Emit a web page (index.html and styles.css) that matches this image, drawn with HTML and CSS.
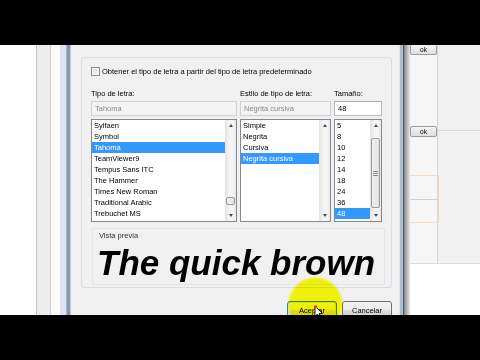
FILE: index.html
```html
<!DOCTYPE html>
<html lang="es">
<head>
<meta charset="utf-8">
<title>Fuente</title>
<link rel="stylesheet" href="styles.css">
</head>
<body>
<div class="letterbox"></div>
<div class="screen">
  <div class="desk-left"></div>
  <div class="frame-left"></div>
  <div class="dlg-body">
    <div class="group">
      <div class="check-row"><span class="checkbox"></span><span>Obtener el tipo de letra a partir del tipo de letra predeterminado</span></div>
      <div class="cols">
        <div class="col col-font">
          <div class="lbl">Tipo de letra:</div>
          <div class="field disabled">Tahoma</div>
          <div class="list">
            <ul class="items">
              <li>Sylfaen</li>
              <li>Symbol</li>
              <li class="sel">Tahoma</li>
              <li>TeamViewer9</li>
              <li>Tempus Sans ITC</li>
              <li>The Hammer</li>
              <li>Times New Roman</li>
              <li>Traditional Arabic</li>
              <li>Trebuchet MS</li>
            </ul>
            <div class="vscroll">
              <span class="arrow up"></span>
              <span class="track"><span class="thumb thumb-small"></span></span>
              <span class="arrow down"></span>
            </div>
          </div>
        </div>
        <div class="col col-style">
          <div class="lbl">Estilo de tipo de letra:</div>
          <div class="field disabled">Negrita cursiva</div>
          <div class="list">
            <ul class="items">
              <li>Simple</li>
              <li>Negrita</li>
              <li>Cursiva</li>
              <li class="sel">Negrita cursiva</li>
            </ul>
            <div class="vscroll">
              <span class="arrow up"></span>
              <span class="track"></span>
              <span class="arrow down"></span>
            </div>
          </div>
        </div>
        <div class="col col-size">
          <div class="lbl">Tamaño:</div>
          <div class="field">48</div>
          <div class="list">
            <ul class="items">
              <li>5</li>
              <li>8</li>
              <li>10</li>
              <li>12</li>
              <li>14</li>
              <li>18</li>
              <li>24</li>
              <li>36</li>
              <li class="sel">48</li>
            </ul>
            <div class="vscroll">
              <span class="arrow up"></span>
              <span class="track"><span class="thumb thumb-big"><span class="grip"></span></span></span>
              <span class="arrow down"></span>
            </div>
          </div>
        </div>
      </div>
      <div class="preview">
        <div class="preview-lbl">Vista previa</div>
        <div class="sample">The quick brown</div>
      </div>
    </div>
    <div class="buttons">
      <button class="btn btn-default">Aceptar</button>
      <button class="btn">Cancelar</button>
    </div>
  </div>
  <div class="frame-right"></div>
  <div class="behind">
    <div class="behind-top">
      <div class="pane-a">
        <div class="mini-btn mini-top">ok</div>
        <div class="mini-btn mini-second">ok</div>
        <div class="orange-box"><div class="ob-half"></div><div class="ob-half"></div></div>
      </div>
      <div class="pane-b"><div class="hline"></div></div>
    </div>
    <div class="behind-bottom"></div>
  </div>
  <div class="highlight"></div>
  <svg class="cursor" width="10" height="14" viewBox="0 0 10 14">
    <path d="M1 1 L1 11.5 L3.5 9 L5.5 13 L7 12.3 L5.2 8.5 L8.5 8.5 Z" fill="#fff" stroke="#000" stroke-width="0.9" stroke-linejoin="round"/>
    <circle cx="1.5" cy="2" r="1.8" fill="#e8401c"/>
  </svg>
</div>
<div class="letterbox"></div>
</body>
</html>
```
FILE: styles.css
```css
* { box-sizing: border-box; margin: 0; padding: 0; }
html, body { width: 480px; height: 360px; overflow: hidden; }
body {
  background: #000;
  font-family: "Liberation Sans", Arial, sans-serif;
  font-size: 7.5px;
  color: #000;
}
.letterbox { height: 45px; background: #000; }
.screen {
  position: relative;
  height: 270px;
  display: flex;
  overflow: hidden;
  background: #f0f0f0;
}
.desk-left {
  width: 60px;
  background: linear-gradient(to right,
    #ffffff 0 36px, #c6c6c6 36px 37px, #ececec 37px 50px,
    #cdcdcd 50px 51px, #fbfbfb 51px 60px);
}
.frame-left {
  width: 11px;
  background: linear-gradient(to right,
    #dfe2f0 0 6px, #aab6c8 6px 7px, #8797b0 7px 10px, #c8ccd4 10px 11px);
}
.dlg-body {
  width: 328px;
  background: #f0f0f0;
  padding: 12px 7px 0 10px;
}
.group {
  border: 1px solid #d5dfe5;
  border-radius: 3px;
  padding: 9px 9px 2px 9px;
}
.check-row {
  display: flex;
  align-items: center;
  gap: 2px;
  height: 9px;
  line-height: 9px;
}
.checkbox {
  width: 9px;
  height: 9px;
  border: 1px solid #8f8f8f;
  background: linear-gradient(135deg, #dcdcdc, #f8f8f8);
  box-shadow: inset 0 0 0 1px #f4f4f4;
}
.cols {
  display: flex;
  gap: 3px;
  margin-top: 13px;
}
.col { display: flex; flex-direction: column; }
.col-font { width: 146px; }
.col-style { width: 91px; }
.col-size { width: 48px; }
.lbl { height: 9px; line-height: 9px; }
.field {
  margin-top: 3px;
  height: 15px;
  line-height: 13px;
  padding-left: 3px;
  border: 1px solid #b7bac0;
  border-top-color: #abadb3;
  background: #fff;
}
.field.disabled { background: #f3f3f3; color: #8a8a8a; border-color: #cfd1d5; }
.list {
  margin-top: 3px;
  height: 103px;
  border: 1px solid #828790;
  background: #fff;
  display: flex;
  overflow: hidden;
}
.items { flex: 1; list-style: none; overflow: hidden; }
.items li { height: 11px; line-height: 11px; padding-left: 2px; white-space: nowrap; }
.items li.sel { background: #3399ff; color: #fff; }
.vscroll {
  width: 11px;
  display: flex;
  flex-direction: column;
  background: linear-gradient(to right, #e3e3e3, #f5f5f5 40%, #f5f5f5 70%, #e8e8e8);
}
.arrow {
  height: 11px;
  display: flex;
  align-items: center;
  justify-content: center;
}
.arrow::before {
  content: "";
  width: 0;
  height: 0;
  border-left: 2.5px solid transparent;
  border-right: 2.5px solid transparent;
}
.arrow.up::before { border-bottom: 3px solid #4a4a4a; }
.arrow.down::before { border-top: 3px solid #4a4a4a; }
.track { flex: 1; display: flex; flex-direction: column; }
.thumb {
  margin: 0 1px;
  border: 1px solid #9a9a9a;
  border-radius: 2px;
  background: linear-gradient(to right, #f2f2f2, #e2e2e2);
}
.thumb-small { margin-top: 66px; height: 8px; }
.thumb-big {
  margin-top: 7px;
  height: 70px;
  display: flex;
  align-items: center;
  justify-content: center;
}
.grip {
  width: 5px;
  height: 5px;
  background: repeating-linear-gradient(to bottom, #8c8c8c 0 1px, transparent 1px 2px);
}
.preview {
  margin: 6px -3px 0 1px;
  height: 57px;
  border: 1px solid #e4e4e4;
  padding: 2px 0 0 6px;
}
.preview-lbl { height: 9px; line-height: 9px; color: #333; }
.sample {
  margin-top: 3px;
  margin-left: -2px;
  font-size: 35px;
  line-height: 40px;
  font-weight: bold;
  font-style: italic;
  white-space: nowrap;
}
.buttons {
  display: flex;
  justify-content: flex-end;
  gap: 5px;
  margin-top: 13px;
}
.btn {
  width: 50px;
  height: 18px;
  font-family: inherit;
  font-size: 7.5px;
  color: #000;
  border: 1px solid #707070;
  border-radius: 3px;
  background: linear-gradient(#f2f2f2, #ebebeb 50%, #dddddd 50%, #cfcfcf);
}
.btn-default { border-color: #3c7fb1; box-shadow: inset 0 0 0 1px #c8e6f8; }
.frame-right {
  width: 11px;
  background: linear-gradient(to right,
    #dce4ec 0 1px, #a9bdd1 1px 4px, #4c4c4c 4px, #9a9a9a 6px, #e6e6e6 11px);
}
.behind {
  width: 70px;
  display: flex;
  flex-direction: column;
  background: #f0f0f0;
}
.behind-top { flex: 1; display: flex; }
.pane-a {
  width: 28px;
  background: #f6f6f6;
  border-right: 1px solid #d6d6d6;
  display: flex;
  flex-direction: column;
}
.mini-btn {
  height: 11px;
  line-height: 10px;
  text-align: center;
  font-size: 6.5px;
  border: 1px solid #9c9c9c;
  border-radius: 2px;
  background: linear-gradient(#f4f4f4, #dedede);
}
.mini-top { border-top: none; height: 10px; }
.mini-second { margin-top: 71px; }
.orange-box {
  margin-top: 38px;
  margin-right: -2px;
  height: 48px;
  border: 1px solid #f3dcc0;
  border-left: none;
  display: flex;
  flex-direction: column;
}
.ob-half { flex: 1; }
.ob-half + .ob-half { border-top: 1px solid #d0d0d0; }
.pane-b { flex: 1; }
.hline { margin-top: 85px; border-top: 1px solid #d8d8d8; }
.behind-bottom { height: 52px; background: #fff; border-top: 1px solid #dcdcdc; }
.highlight {
  position: absolute;
  left: 287px;
  top: 231px;
  width: 57px;
  height: 57px;
  border-radius: 50%;
  background: radial-gradient(circle, rgba(255,255,0,0.95) 0 62%, rgba(255,255,0,0) 71%);
  mix-blend-mode: multiply;
}
.cursor { position: absolute; left: 314px; top: 260px; }
```
